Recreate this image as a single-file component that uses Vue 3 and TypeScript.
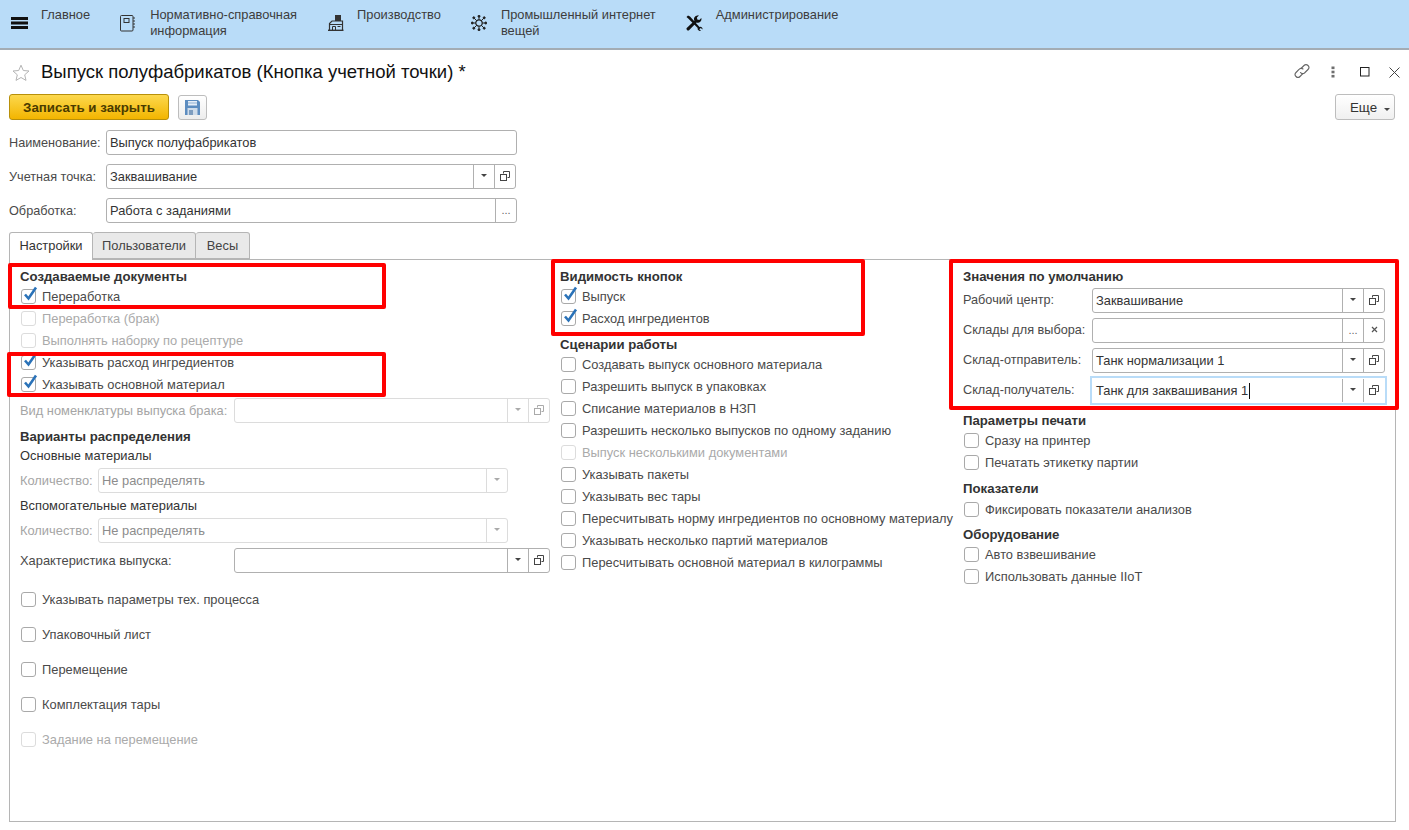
<script setup lang="ts">
type FieldBtn = 'drop' | 'open' | 'dots' | 'clear'

interface Item {
  kind: 'title' | 'text' | 'check' | 'field'
  text: string
  mt?: number
  checked?: boolean
  disabled?: boolean
  value?: string
  labelW?: number
  fieldW?: number
  btns?: FieldBtn[]
  focused?: boolean
}

const navItems = [
  { id: 'menu', lines: ['Главное'] },
  { id: 'book', lines: ['Нормативно-справочная', 'информация'] },
  { id: 'plant', lines: ['Производство'] },
  { id: 'iot', lines: ['Промышленный интернет', 'вещей'] },
  { id: 'tools', lines: ['Администрирование'] },
]

const formRows: Item[] = [
  { kind: 'field', text: 'Наименование:', value: 'Выпуск полуфабрикатов', fieldW: 411, btns: [] },
  { kind: 'field', text: 'Учетная точка:', value: 'Заквашивание', fieldW: 410, btns: ['drop', 'open'] },
  { kind: 'field', text: 'Обработка:', value: 'Работа с заданиями', fieldW: 411, btns: ['dots'] },
]

const check = (text: string, checked = false, disabled = false, mt = 0): Item => ({ kind: 'check', text, checked, disabled, mt })
const title = (text: string, mt = 0): Item => ({ kind: 'title', text, mt })

const columns: { width: number; items: Item[] }[] = [
  {
    width: 530,
    items: [
      title('Создаваемые документы'),
      check('Переработка', true),
      check('Переработка (брак)', false, true),
      check('Выполнять наборку по рецептуре', false, true),
      check('Указывать расход ингредиентов', true),
      check('Указывать основной материал', true),
      { kind: 'field', text: 'Вид номенклатуры выпуска брака:', labelW: 214, fieldW: 316, disabled: true, btns: ['drop', 'open'], mt: 3 },
      title('Варианты распределения', 4),
      { kind: 'text', text: 'Основные материалы' },
      { kind: 'field', text: 'Количество:', value: 'Не распределять', labelW: 78, fieldW: 410, disabled: true, btns: ['drop'], mt: 2 },
      { kind: 'text', text: 'Вспомогательные материалы', mt: 3 },
      { kind: 'field', text: 'Количество:', value: 'Не распределять', labelW: 78, fieldW: 410, disabled: true, btns: ['drop'], mt: 2 },
      { kind: 'field', text: 'Характеристика выпуска:', labelW: 214, fieldW: 316, btns: ['drop', 'open'], mt: 5 },
      check('Указывать параметры тех. процесса', false, false, 15),
      check('Упаковочный лист', false, false, 13),
      check('Перемещение', false, false, 13),
      check('Комплектация тары', false, false, 13),
      check('Задание на перемещение', false, true, 13),
    ],
  },
  {
    width: 393,
    items: [
      title('Видимость кнопок'),
      check('Выпуск', true),
      check('Расход ингредиентов', true),
      title('Сценарии работы', 6),
      check('Создавать выпуск основного материала', false, false, -1),
      check('Разрешить выпуск в упаковках'),
      check('Списание материалов в НЗП'),
      check('Разрешить несколько выпусков по одному заданию'),
      check('Выпуск несколькими документами', false, true),
      check('Указывать пакеты'),
      check('Указывать вес тары'),
      check('Пересчитывать норму ингредиентов по основному материалу'),
      check('Указывать несколько партий материалов'),
      check('Пересчитывать основной материал в килограммы'),
    ],
  },
  {
    width: 422,
    items: [
      title('Значения по умолчанию'),
      { kind: 'field', text: 'Рабочий центр:', value: 'Заквашивание', labelW: 129, fieldW: 293, btns: ['drop', 'open'], mt: 3 },
      { kind: 'field', text: 'Склады для выбора:', labelW: 129, fieldW: 293, btns: ['dots', 'clear'], mt: 5 },
      { kind: 'field', text: 'Склад-отправитель:', value: 'Танк нормализации 1', labelW: 129, fieldW: 293, btns: ['drop', 'open'], mt: 5 },
      { kind: 'field', text: 'Склад-получатель:', value: 'Танк для заквашивания 1', labelW: 129, fieldW: 293, btns: ['drop', 'open'], mt: 5, focused: true },
      title('Параметры печати', 8),
      check('Сразу на принтер', false, false, -1),
      check('Печатать этикетку партии'),
      title('Показатели', 6),
      check('Фиксировать показатели анализов'),
      title('Оборудование', 5),
      check('Авто взвешивание', false, false, -1),
      check('Использовать данные IIoT'),
    ],
  },
]

const tabs = [
  { name: 'Настройки', width: 84 },
  { name: 'Пользователи', width: 103 },
  { name: 'Весы', width: 54 },
]

// red callouts drawn over the panel, coordinates are the content here
const callouts = [
  { left: -2, top: 3, width: 378, height: 46 },
  { left: -3, top: 92, width: 379, height: 45 },
  { left: 541, top: -1, width: 314, height: 77 },
  { left: 939, top: -1, width: 450, height: 151 },
]
</script>

<template>
  <div class="page">
    <!-- top navigation -->
    <nav class="nav">
      <div v-for="item in navItems" :key="item.id" class="nav-item">
        <span class="nav-icon">
          <svg v-if="item.id === 'menu'" class="ic-menu" width="17" height="12" viewBox="0 0 17 12" fill="#111">
            <rect x="0" y="0" width="17" height="3" />
            <rect x="0" y="4.5" width="17" height="3" />
            <rect x="0" y="9" width="17" height="3" />
          </svg>
          <svg v-else-if="item.id === 'book'" width="16" height="17" viewBox="0 0 16 17" fill="none" stroke="#333">
            <rect x="0.5" y="0.5" width="12.5" height="15.5" rx="1" />
            <rect x="4" y="3.5" width="5" height="4" />
            <path d="M13 3h2M13 6h2M13 9h2M13 12h2" />
          </svg>
          <svg v-else-if="item.id === 'plant'" width="17" height="16" viewBox="0 0 17 16" fill="none" stroke="#333">
            <rect x="8" y="0" width="6" height="6" fill="#333" stroke="none" />
            <path d="M2.500 15V8.500l2.500-2.500h10.500v9" stroke-width="1.200" />
            <path d="M2.500 9.500h13" />
            <path d="M5.500 15v-3.500h3V15M10.500 11.500h3" />
            <path d="M1 15.300h15.500" stroke-width="1.400" />
          </svg>
          <svg v-else-if="item.id === 'iot'" width="16" height="16" viewBox="0 0 16 16" fill="#222" stroke="#222">
            <circle cx="8" cy="8" r="3.2" fill="none" stroke-width="1.2" />
            <path d="M8 5V1M8 11v4M5 8H1M11 8h4M5.8 5.8 2.8 2.8M10.2 5.8l3-3M5.8 10.2l-3 3M10.2 10.2l3 3" stroke-width="1" />
            <circle cx="8" cy="1.2" r="1" />
            <circle cx="8" cy="14.8" r="1" />
            <circle cx="1.2" cy="8" r="1" />
            <circle cx="14.8" cy="8" r="1" />
            <circle cx="2.8" cy="2.8" r="1" />
            <circle cx="13.2" cy="2.8" r="1" />
            <circle cx="2.8" cy="13.2" r="1" />
            <circle cx="13.2" cy="13.2" r="1" />
          </svg>
          <svg v-else width="17" height="16" viewBox="0 0 17 16" fill="#111">
            <path d="M0.5 2 2 0.5l2 1 9.5 10.5a2.2 2.2 0 0 1 3 2.4l-1.700-1.500-1.500 1.300 1.600 1.600a2.400 2.400 0 0 1-3.200-2.800L2.200 3.600z" />
            <path d="M11.500 0.400a3.600 3.600 0 0 1 1.400.100l-2 2 .400 2 2 .500 2-2a3.600 3.600 0 0 1-4.700 4.400L3.300 15a1.600 1.600 0 0 1-2.300-2.300l7.400-7a3.600 3.600 0 0 1 3.100-5.300z" />
          </svg>
        </span>
        <span class="nav-text">
          <span v-for="line in item.lines" :key="line" class="nav-line">{{ line }}</span>
        </span>
      </div>
    </nav>

    <main class="content">
      <!-- title row -->
      <header class="head">
        <svg class="star" width="18" height="17" viewBox="0 0 18 17" fill="#fff" stroke="#b4b4b4">
          <path d="M9 1.2l2.3 5.3 5.7.5-4.3 3.8 1.3 5.6L9 13.5l-5 2.9 1.3-5.6L1 7l5.7-.5z" />
        </svg>
        <h1 class="title">Выпуск полуфабрикатов (Кнопка учетной точки) *</h1>
        <div class="win-btns">
          <svg class="w-link" width="16" height="16" viewBox="0 0 16 16" fill="none" stroke="#666" stroke-width="1.100" stroke-linecap="round">
            <path d="M7 5.500 10 2.500a2.800 2.800 0 0 1 4 4L10.500 10a2.800 2.800 0 0 1-4-.500" />
            <path d="M9 6a2.800 2.800 0 0 0-4 .500L2 9.500a2.800 2.800 0 0 0 4 4l2.800-2.800" />
          </svg>
          <svg class="w-dots" width="4" height="12" viewBox="0 0 4 12" fill="#6e6e6e">
            <rect x="0.500" y="0.500" width="3" height="2.600" />
            <rect x="0.500" y="4.700" width="3" height="2.600" />
            <rect x="0.500" y="8.900" width="3" height="2.600" />
          </svg>
          <svg class="w-max" width="10" height="10" viewBox="0 0 10 10" fill="none" stroke="#222">
            <rect x="0.500" y="0.500" width="8.500" height="8.500" />
          </svg>
          <svg class="w-close" width="11" height="11" viewBox="0 0 11 11" fill="none" stroke="#444">
            <path d="M.500 .500l10 10M10.500 .500l-10 10" />
          </svg>
        </div>
      </header>

      <!-- toolbar -->
      <div class="toolbar">
        <button class="btn-primary">Записать и закрыть</button>
        <button class="btn-save">
          <svg width="15" height="15" viewBox="0 0 15 15">
            <path d="M0 0h13l2 2v13H0z" fill="#5d8dc0" />
            <rect x="3" y="1" width="9" height="4.500" fill="#e6eef7" />
            <rect x="3" y="2.500" width="9" height="1" fill="#8fb0d4" />
            <rect x="2.500" y="8" width="10" height="7" fill="#cfdcea" />
            <rect x="4" y="10" width="4" height="5" fill="#7e9dbf" />
          </svg>
        </button>
        <button class="btn-more">Еще<i class="caret more-caret" /></button>
      </div>

      <!-- header fields -->
      <div class="form">
        <div v-for="row in formRows" :key="row.text" class="field-row">
          <span class="label form-label">{{ row.text }}</span>
          <div class="field" :style="{ width: row.fieldW + 'px' }">
            <span class="value">{{ row.value }}</span>
            <span v-for="b in row.btns" :key="b" class="fbtn">
              <i v-if="b === 'drop'" class="caret" />
              <svg v-else-if="b === 'open'" width="10" height="10" viewBox="0 0 10 10" fill="none" stroke="#444">
                <path d="M3.500 2.500V.500h6v6h-2" />
                <rect x="0.500" y="3.500" width="6" height="6" />
              </svg>
              <span v-else class="dots-txt">...</span>
            </span>
          </div>
        </div>
      </div>

      <!-- tabs -->
      <div class="tabs">
        <div
          v-for="(tab, i) in tabs"
          :key="tab.name"
          class="tab"
          :class="{ active: i === 0 }"
          :style="{ width: tab.width + 'px' }"
        >{{ tab.name }}</div>
      </div>

      <section class="panel">
        <div v-for="(col, c) in columns" :key="c" class="col" :class="'col-' + c" :style="{ width: col.width + 'px' }">
          <template v-for="(item, n) in col.items" :key="n">
            <div v-if="item.kind === 'title'" class="sec-title" :style="{ marginTop: (item.mt || 0) + 'px' }">{{ item.text }}</div>
            <div v-else-if="item.kind === 'text'" class="sec-text" :style="{ marginTop: (item.mt || 0) + 'px' }">{{ item.text }}</div>
            <div v-else-if="item.kind === 'check'" class="check" :class="{ disabled: item.disabled }" :style="{ marginTop: (item.mt || 0) + 'px' }">
              <span class="box">
                <svg v-if="item.checked" class="tick" width="16" height="16" viewBox="0 0 16 16" fill="none" stroke="#2a72b8" stroke-width="2.600">
                  <path d="M3 8.500l3.500 4L14 1.500" />
                </svg>
              </span>
              <span>{{ item.text }}</span>
            </div>
            <div v-else class="field-row" :class="{ disabled: item.disabled }" :style="{ marginTop: (item.mt || 0) + 'px' }">
              <span class="label" :style="{ width: item.labelW + 'px' }">{{ item.text }}</span>
              <div class="field" :class="{ focused: item.focused }" :style="{ width: item.fieldW + 'px' }">
                <span class="value">{{ item.value }}<i v-if="item.focused" class="cursor" /></span>
                <span v-for="b in item.btns" :key="b" class="fbtn">
                  <i v-if="b === 'drop'" class="caret" />
                  <svg v-else-if="b === 'open'" width="10" height="10" viewBox="0 0 10 10" fill="none" stroke="currentColor">
                    <path d="M3.500 2.500V.500h6v6h-2" />
                    <rect x="0.500" y="3.500" width="6" height="6" />
                  </svg>
                  <span v-else-if="b === 'dots'" class="dots-txt">...</span>
                  <svg v-else width="7" height="7" viewBox="0 0 7 7" fill="none" stroke="#555" stroke-width="1.200">
                    <path d="M1 1l5 5M6 1 1 6" />
                  </svg>
                </span>
              </div>
            </div>
          </template>
        </div>

        <div
          v-for="(box, i) in callouts"
          :key="i"
          class="callout"
          :style="{ left: box.left + 'px', top: box.top + 'px', width: box.width + 'px', height: box.height + 'px' }"
        />
      </section>
    </main>
  </div>
</template>

<style>
html, body { margin: 0; background: #fff; }
</style>

<style scoped>
.page {
  width: 1409px;
  height: 830px;
  overflow: hidden;
  font-family: 'Liberation Sans', Arial, sans-serif;
  font-size: 12.87px;
  color: #333;
  background: #fff;
}

/* ─── NAV ─── */
.nav {
  display: flex;
  gap: 30px;
  height: 48px;
  padding-left: 11px;
  background: #b9dcf8;
  border-bottom: 2px solid #a3acb4;
}
.nav-item { display: flex; }
.nav-icon {
  width: 30px;
  height: 48px;
  display: flex;
  align-items: center;
  padding-bottom: 2px;
  box-sizing: border-box;
}
.nav-text { padding-top: 7px; }
.nav-line { display: block; line-height: 16px; white-space: nowrap; color: #3d3d3d; }

/* ─── HEAD ─── */
.content { padding: 0 13px 0 9px; }
.head {
  height: 44px;
  display: flex;
  align-items: center;
}
.star { margin: 0 5px 0 3px; }
.title {
  margin: 0 0 0 6px;
  font-size: 18.5px;
  font-weight: 400;
  color: #111;
}
.win-btns {
  margin-left: auto;
  margin-right: -4px;
  display: flex;
  align-items: center;
}
.w-link { margin-bottom: 3px; }
.w-dots { margin-left: 21px; }
.w-max { margin-left: 25px; }
.w-close { margin-left: 19px; }

.toolbar { display: flex; height: 26px; }
button { font-family: inherit; font-size: 13.3px; cursor: pointer; padding: 0; box-sizing: border-box; }
.btn-primary {
  width: 160px;
  height: 26px;
  border: 1px solid #b8900a;
  border-radius: 3px;
  background: linear-gradient(#fcd84e, #f3b500);
  color: #4a3b00;
  font-weight: 700;
}
.btn-save {
  width: 29px;
  height: 25px;
  margin: 1px 0 0 9px;
  border: 1px solid #bdbdbd;
  border-radius: 3px;
  background: linear-gradient(#fff, #ededed);
  display: flex;
  align-items: center;
  justify-content: center;
}
.btn-more {
  width: 60px;
  height: 26px;
  margin: 0 1px 0 auto;
  padding-left: 14px;
  border: 1px solid #bdbdbd;
  border-radius: 3px;
  background: linear-gradient(#fff, #f0f0f0);
  color: #333;
  text-align: left;
}
.caret {
  display: inline-block;
  width: 0;
  height: 0;
  border-left: 3px solid transparent;
  border-right: 3px solid transparent;
  border-top: 3px solid #444;
}
.more-caret { margin-left: 7px; vertical-align: 1px; }

/* ─── FORM ─── */
.form {
  margin-top: 10px;
  display: flex;
  flex-direction: column;
  gap: 9px;
}
.field-row { display: flex; align-items: center; height: 25px; }
.label { flex: none; color: #4a4a4a; white-space: nowrap; }
.form-label { width: 97px; font-size: 12.7px; }
.col-2 .label { font-size: 12.7px; padding-bottom: 2px; }
.field {
  display: flex;
  height: 25px;
  box-sizing: border-box;
  border: 1px solid #b0b0b0;
  border-radius: 3px;
  background: #fff;
  color: #444;
}
.value { flex: 1; padding-left: 3px; line-height: 23px; white-space: nowrap; color: #333; }
.fbtn {
  flex: none;
  width: 20px;
  display: flex;
  align-items: center;
  justify-content: center;
  border-left: 1px solid #b0b0b0;
  padding-bottom: 2px;
  box-sizing: content-box;
}
.dots-txt { font-size: 11px; color: #666; letter-spacing: 0; }
.field.focused {
  border-color: #fff;
  border-radius: 0;
  outline: 2px solid #b9dcf8;
}
.cursor {
  display: inline-block;
  width: 1px;
  height: 16px;
  margin-left: 1px;
  vertical-align: -4px;
  background: #111;
}
.field-row.disabled .label { color: #a5a5a5; }
.field-row.disabled .field { border-color: #dcdcdc; color: #aaa; }
.field-row.disabled .fbtn { border-color: #dcdcdc; }
.field-row.disabled .value { color: #8c8c8c; }
.field-row.disabled .caret { border-top-color: #aaa; }

/* ─── TABS ─── */
.tabs { display: flex; margin-top: 9px; height: 27px; position: relative; z-index: 1; }
.tab {
  height: 27px;
  box-sizing: border-box;
  text-align: center;
  line-height: 25px;
  border: 1px solid #b5b5b5;
  border-left-width: 0;
  border-radius: 3px 3px 0 0;
  background: #e9e9e9;
  color: #444;
}
.tab.active {
  height: 28px;
  background: #fff;
  border-left-width: 1px;
  border-bottom: 0;
  color: #333;
}

/* ─── PANEL ─── */
.panel {
  position: relative;
  display: flex;
  gap: 10px;
  height: 563px;
  box-sizing: border-box;
  padding: 6px 0 0 10px;
  border: 1px solid #b5b5b5;
}
.col { flex: none; }
.sec-title { height: 19px; line-height: 20px; font-size: 13.2px; font-weight: 700; color: #333; white-space: nowrap; }
.sec-title:first-child { line-height: 22px; }
.sec-text { height: 20px; line-height: 20px; color: #333; }
.check {
  height: 22px;
  display: flex;
  align-items: center;
  gap: 6px;
  padding-left: 1px;
  color: #4a4a4a;
  white-space: nowrap;
}
.box {
  position: relative;
  flex: none;
  width: 15px;
  height: 15px;
  box-sizing: border-box;
  border: 1px solid #a9a9a9;
  border-radius: 3px;
  background: #fff;
}
.tick { position: absolute; left: 0; top: -4px; }
.check.disabled { color: #aaa; }
.check.disabled .box { border-color: #dcdcdc; }

.callout {
  position: absolute;
  box-sizing: border-box;
  border: 4px solid #f00;
  border-radius: 2px;
  pointer-events: none;
}
</style>
